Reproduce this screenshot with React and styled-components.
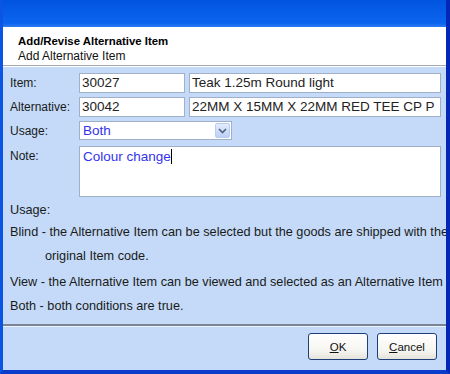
import styled, { createGlobalStyle } from "styled-components";

const Global = createGlobalStyle`
  html, body {
    margin: 0;
    padding: 0;
    width: 450px;
    height: 374px;
    overflow: hidden;
    background: #ffffff;
  }
  * {
    box-sizing: border-box;
  }
`;

const Window = styled.div`
  width: 450px;
  height: 374px;
  display: flex;
  flex-direction: column;
  border-left: 3px solid #0a55e4;
  border-right: 4px solid #0527b8;
  border-bottom: 4px solid #0a3ccc;
  font-family: "Liberation Sans", Arial, sans-serif;
  overflow: hidden;
`;

const TitleBar = styled.div`
  height: 27px;
  flex: none;
  margin: 0 -4px 0 -3px;
  background: linear-gradient(180deg, #0053e0 0%, #0860ea 55%, #0a63ec 85%, #2b7af2 100%);
  border-right: 4px solid #0a3fd0;
`;

const Header = styled.div`
  height: 39px;
  flex: none;
  background: #ffffff;
  padding: 7px 0 0 15px;
  border-bottom: 1px solid #a6a9b3;
`;

const HeaderTitle = styled.div`
  font-weight: bold;
  font-size: 11.4px;
  color: #000;
  line-height: 14px;
`;

const HeaderSub = styled.div`
  font-size: 12px;
  color: #111;
  line-height: 14px;
  margin-top: 1px;
`;

const Body = styled.div`
  flex: 1;
  min-height: 0;
  background: #c4daf8;
  border-top: 1px solid #ffffff;
  padding: 6px 0 0 7px;
  display: flex;
  flex-direction: column;
  overflow: hidden;
`;

const Row = styled.div`
  display: flex;
  align-items: ${(p) => (p.$top ? "flex-start" : "center")};
  gap: 4px;
  margin-bottom: ${(p) => (p.$gap === undefined ? 4 : p.$gap)}px;
`;

const Label = styled.div`
  width: 65px;
  font-size: 12px;
  color: #1a1a1a;
  padding-top: ${(p) => (p.$top ? "3px" : "0")};
`;

const Input = styled.div`
  width: ${(p) => p.$w}px;
  height: 20px;
  background: #fff;
  border: 1px solid #9fb0c8;
  font-size: 13.5px;
  line-height: 18px;
  padding-left: 2px;
  color: #222;
  white-space: nowrap;
  overflow: hidden;
`;

const Select = styled.div`
  width: 153px;
  height: 19px;
  background: #fff;
  border: 1px solid #9fb0c8;
  display: flex;
  align-items: center;
  justify-content: space-between;
  font-size: 13.5px;
  color: #3333ee;
  padding-left: 3px;
`;

const DropButton = styled.div`
  width: 15px;
  height: 15px;
  margin-right: 1px;
  border: 1px solid #b8cdf3;
  border-radius: 2px;
  background: linear-gradient(180deg, #e4ecfd, #bdd0f6);
  display: flex;
  align-items: center;
  justify-content: center;
`;

const NoteBox = styled.div`
  width: 362px;
  height: 51px;
  background: #fff;
  border: 1px solid #9fb0c8;
  font-size: 13.5px;
  color: #3333ee;
  padding: 2px 0 0 3px;
  line-height: 16px;
`;

const Caret = styled.span`
  display: inline-block;
  width: 1px;
  height: 15px;
  background: #000;
  vertical-align: -3px;
`;

const Info = styled.div`
  font-size: 12.7px;
  color: #1a1a1a;
  white-space: nowrap;
  line-height: 14px;
  margin-top: ${(p) => p.$mt}px;
  padding-left: ${(p) => p.$indent || 0}px;
`;

const Footer = styled.div`
  height: 46px;
  flex: none;
  background: #c4daf8;
  border-top: 2px solid #7a8695;
  box-shadow: inset 0 1px 0 #e9f1fc;
  display: flex;
  justify-content: flex-end;
  align-items: flex-start;
  padding: 7px 9px 0 0;
  gap: 9px;
`;

const Button = styled.button`
  width: 60px;
  height: 27px;
  border: 1px solid #1d3f7a;
  border-radius: 3px;
  background: linear-gradient(180deg, #ffffff 0%, #f5f4ef 70%, #e4e2d9 100%);
  font-family: "Liberation Sans", Arial, sans-serif;
  font-size: 11.5px;
  color: #111;
  padding: 0;
  u {
    text-decoration: underline;
  }
`;

export default function App() {
  return (
    <>
      <Global />
      <Window>
        <TitleBar />
        <Header>
          <HeaderTitle>Add/Revise Alternative Item</HeaderTitle>
          <HeaderSub>Add Alternative Item</HeaderSub>
        </Header>
        <Body>
          <Row>
            <Label>Item:</Label>
            <Input $w={106}>30027</Input>
            <Input $w={252}>Teak 1.25m Round light</Input>
          </Row>
          <Row>
            <Label>Alternative:</Label>
            <Input $w={106}>30042</Input>
            <Input $w={252}>22MM X 15MM X 22MM RED TEE CP P</Input>
          </Row>
          <Row $gap={6}>
            <Label>Usage:</Label>
            <Select>
              Both
              <DropButton>
                <svg width="9" height="6" viewBox="0 0 9 6">
                  <path d="M1 1 L4.5 4.5 L8 1" fill="none" stroke="#4d6185" strokeWidth="1.6" />
                </svg>
              </DropButton>
            </Select>
          </Row>
          <Row $top $gap={0}>
            <Label $top>Note:</Label>
            <NoteBox>
              Colour change<Caret />
            </NoteBox>
          </Row>
          <Info $mt={6}>Usage:</Info>
          <Info $mt={8}>
            Blind - the Alternative Item can be selected but the goods are shipped with the
          </Info>
          <Info $mt={10} $indent={35}>original Item code.</Info>
          <Info $mt={12}>View - the Alternative Item can be viewed and selected as an Alternative Item</Info>
          <Info $mt={10}>Both - both conditions are true.</Info>
        </Body>
        <Footer>
          <Button>
            <u>O</u>K
          </Button>
          <Button>
            <u>C</u>ancel
          </Button>
        </Footer>
      </Window>
    </>
  );
}
